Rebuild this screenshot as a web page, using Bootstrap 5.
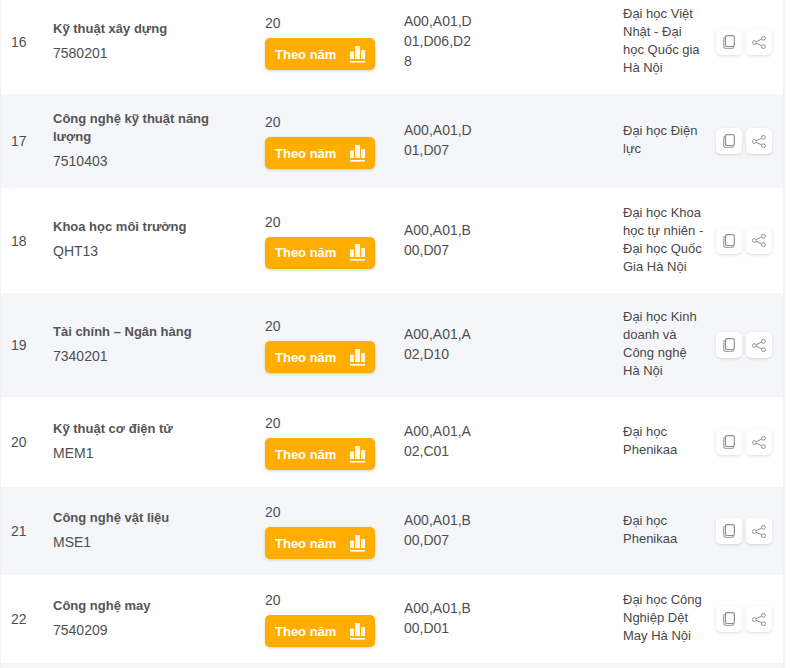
<!DOCTYPE html>
<html lang="vi">
<head>
<meta charset="utf-8">
<title>Ngành học</title>
<link href="https://cdn.jsdelivr.net/npm/bootstrap@5.3.0/dist/css/bootstrap.min.css" rel="stylesheet">
<style>
html,body{height:100%;overflow:hidden;background:#fff}
body{font-family:"Liberation Sans",Arial,sans-serif;font-size:14px;line-height:18px;color:#4f4f4f}
.sheet{width:783px;margin-top:-10px;margin-left:1px;box-shadow:0 0 0 1px #f2f2f2;border-right:1px solid #f2f2f2;height:700px}
.rowline{display:grid;grid-template-columns:42px 212px 139px 219px 93px 1fr;align-items:center;padding-left:10px}
.rowline.alt{background:#f5f6fa}
.h104{height:104px}.h94{height:94px}.h105{height:105px}.h90{height:90px}.h88{height:88px}
.namecell{padding-bottom:4px}
.title{font-weight:700;color:#555;font-size:13px;line-height:18px;margin-top:1px;margin-bottom:6px;width:180px}
.codes{line-height:20px;width:72px;word-break:break-all;margin-top:-2px}
.school{width:83px;margin-top:-2px;font-size:13px;color:#484848}
.yearbtn{display:flex;align-items:center;justify-content:space-between;width:110px;height:32px;margin-top:6px;padding:1px 10px 0;background:#ffae00;color:#fff;border:0;border-radius:5px;font-weight:700;font-size:13px;box-shadow:0 1px 3px rgba(0,0,0,.18)}
.yearbtn svg{margin-top:-1px}
.tool{width:26px;height:26px;padding:0;display:flex;align-items:center;justify-content:center;background:#fff;border:0;border-radius:5px;box-shadow:0 1px 3px rgba(0,0,0,.14)}
.tools{display:flex;gap:4px}
.tailrow{height:40px}
</style>
</head>
<body>
<svg width="0" height="0" class="d-block">
<defs>
<symbol id="ico-bars" viewBox="0 0 15 17"><path fill="#fff" fill-opacity=".9" d="M0 5.500h4V13H0zM5 0h5v13H5zM11 4h4v9h-4z"/><path fill="#fff" d="M0 15h15v1.600H0z"/></symbol>
<symbol id="ico-copy" viewBox="0 0 12 14"><rect x="2.500" y=".7" width="8.800" height="10.800" rx="1.600" fill="#fff" stroke="#8f8f8f" stroke-width="1.200"/><path d="M2.500 2.200C1.300 2.400.7 3 .7 4.200v6.800c0 1.400.8 2.300 2.300 2.300h6c1 0 1.600-.5 1.900-1.400" fill="none" stroke="#a8a8a8" stroke-width="1.300"/></symbol>
<symbol id="ico-share" viewBox="0 0 14 13"><g fill="none" stroke="#909090" stroke-width="1"><circle cx="11.500" cy="2.300" r="1.900"/><circle cx="11.500" cy="10.700" r="1.900"/><circle cx="2.400" cy="6.500" r="1.900"/><path d="M4.100 5.700 9.800 3.100M4.100 7.300l5.700 2.600"/></g></symbol>
</defs>
</svg>
<div class="sheet">

<div class="rowline h104">
<div>16</div>
<div class="namecell"><div class="title">Kỹ thuật xây dựng</div><div>7580201</div></div>
<div><div>20</div><button class="yearbtn" type="button">Theo năm<svg width="15" height="17"><use href="#ico-bars"/></svg></button></div>
<div class="codes">A00,A01,D01,D06,D28</div>
<div class="school">Đại học Việt Nhật - Đại học Quốc gia Hà Nội</div>
<div class="tools"><button class="tool" type="button" aria-label="Sao chép"><svg width="12" height="14"><use href="#ico-copy"/></svg></button><button class="tool" type="button" aria-label="Chia sẻ"><svg width="14" height="13"><use href="#ico-share"/></svg></button></div>
</div>

<div class="rowline alt h94">
<div>17</div>
<div class="namecell"><div class="title">Công nghệ kỹ thuật năng lượng</div><div>7510403</div></div>
<div><div>20</div><button class="yearbtn" type="button">Theo năm<svg width="15" height="17"><use href="#ico-bars"/></svg></button></div>
<div class="codes">A00,A01,D01,D07</div>
<div class="school">Đại học Điện lực</div>
<div class="tools"><button class="tool" type="button" aria-label="Sao chép"><svg width="12" height="14"><use href="#ico-copy"/></svg></button><button class="tool" type="button" aria-label="Chia sẻ"><svg width="14" height="13"><use href="#ico-share"/></svg></button></div>
</div>

<div class="rowline h105">
<div>18</div>
<div class="namecell"><div class="title">Khoa học môi trường</div><div>QHT13</div></div>
<div><div>20</div><button class="yearbtn" type="button">Theo năm<svg width="15" height="17"><use href="#ico-bars"/></svg></button></div>
<div class="codes">A00,A01,B00,D07</div>
<div class="school">Đại học Khoa học tự nhiên - Đại học Quốc Gia Hà Nội</div>
<div class="tools"><button class="tool" type="button" aria-label="Sao chép"><svg width="12" height="14"><use href="#ico-copy"/></svg></button><button class="tool" type="button" aria-label="Chia sẻ"><svg width="14" height="13"><use href="#ico-share"/></svg></button></div>
</div>

<div class="rowline alt h104">
<div>19</div>
<div class="namecell"><div class="title">Tài chính – Ngân hàng</div><div>7340201</div></div>
<div><div>20</div><button class="yearbtn" type="button">Theo năm<svg width="15" height="17"><use href="#ico-bars"/></svg></button></div>
<div class="codes">A00,A01,A02,D10</div>
<div class="school">Đại học Kinh doanh và Công nghệ Hà Nội</div>
<div class="tools"><button class="tool" type="button" aria-label="Sao chép"><svg width="12" height="14"><use href="#ico-copy"/></svg></button><button class="tool" type="button" aria-label="Chia sẻ"><svg width="14" height="13"><use href="#ico-share"/></svg></button></div>
</div>

<div class="rowline h90">
<div>20</div>
<div class="namecell"><div class="title">Kỹ thuật cơ điện tử</div><div>MEM1</div></div>
<div><div>20</div><button class="yearbtn" type="button">Theo năm<svg width="15" height="17"><use href="#ico-bars"/></svg></button></div>
<div class="codes">A00,A01,A02,C01</div>
<div class="school">Đại học Phenikaa</div>
<div class="tools"><button class="tool" type="button" aria-label="Sao chép"><svg width="12" height="14"><use href="#ico-copy"/></svg></button><button class="tool" type="button" aria-label="Chia sẻ"><svg width="14" height="13"><use href="#ico-share"/></svg></button></div>
</div>

<div class="rowline alt h88">
<div>21</div>
<div class="namecell"><div class="title">Công nghệ vật liệu</div><div>MSE1</div></div>
<div><div>20</div><button class="yearbtn" type="button">Theo năm<svg width="15" height="17"><use href="#ico-bars"/></svg></button></div>
<div class="codes">A00,A01,B00,D07</div>
<div class="school">Đại học Phenikaa</div>
<div class="tools"><button class="tool" type="button" aria-label="Sao chép"><svg width="12" height="14"><use href="#ico-copy"/></svg></button><button class="tool" type="button" aria-label="Chia sẻ"><svg width="14" height="13"><use href="#ico-share"/></svg></button></div>
</div>

<div class="rowline h88">
<div>22</div>
<div class="namecell"><div class="title">Công nghệ may</div><div>7540209</div></div>
<div><div>20</div><button class="yearbtn" type="button">Theo năm<svg width="15" height="17"><use href="#ico-bars"/></svg></button></div>
<div class="codes">A00,A01,B00,D01</div>
<div class="school">Đại học Công Nghiệp Dệt May Hà Nội</div>
<div class="tools"><button class="tool" type="button" aria-label="Sao chép"><svg width="12" height="14"><use href="#ico-copy"/></svg></button><button class="tool" type="button" aria-label="Chia sẻ"><svg width="14" height="13"><use href="#ico-share"/></svg></button></div>
</div>

<div class="rowline alt tailrow"></div>
</div>
<script src="https://cdn.jsdelivr.net/npm/bootstrap@5.3.0/dist/js/bootstrap.bundle.min.js"></script>
</body>
</html>
